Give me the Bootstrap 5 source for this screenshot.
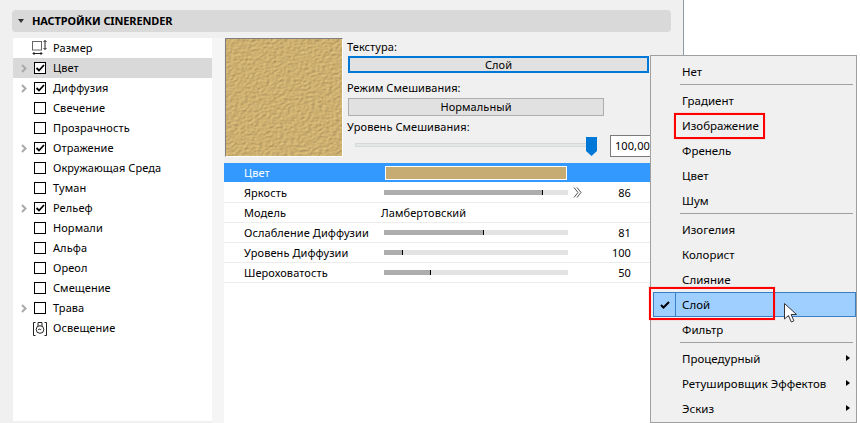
<!DOCTYPE html>
<html lang="ru"><head><meta charset="utf-8">
<link href="https://cdn.jsdelivr.net/npm/bootstrap@5.3.0/dist/css/bootstrap.min.css" rel="stylesheet">
<style>
html,body{width:860px;height:423px;overflow:hidden;background:#fff;}
body{font-family:"Noto Sans","Liberation Sans",sans-serif;font-size:11px;line-height:20px;color:#000;letter-spacing:.08px;position:relative;}
.stage{width:684px;height:423px;background:#f0f0f0;padding:10px 12px 0 12px;border-right:1px solid #8b9baa;}
.hdr{height:22px;background:#d9d9d9;border-radius:4px;font-weight:700;font-size:11px;line-height:22px;letter-spacing:-.12px;padding-left:6px;gap:8px;}
.tri{width:0;height:0;border-left:3.5px solid transparent;border-right:3.5px solid transparent;border-top:4px solid #333;}
.body-wrap{margin-top:6px;height:385px;}
.tree{width:199px;height:383px;margin-left:1px;background:#fff;flex:none;}
.tr-row{height:20px;}
.tr-row.sel{background:#d9d9d9;}
.arrow{width:21px;flex:none;padding-left:8px;line-height:0;}
.ck{width:12px;height:12px;border:1px solid #000;background:#fff;flex:none;margin-right:7px;}
.ic{width:16px;height:16px;flex:none;margin-left:-2px;margin-right:5px;}
.gap-side{width:12px;background:#f5f5f5;flex:none;}
.rightp{flex:1;min-width:0;}
.top-zone{height:125px;padding:0 0 0 1px;background:#f0f0f0;}
.tex{width:118px;height:119px;flex:none;border:1px solid #808080;border-right-color:#fff;border-bottom-color:#fff;display:block;}
.ctrl{padding-left:4px;flex:1;min-width:0;}
.lbl{line-height:14px;height:14px;}
.selbtn{height:17px;width:301px;margin-left:1px;background:#e1e1e1;border:2px solid #0078d7;text-align:center;line-height:13px;margin-top:2px;}
.selbtn2{height:18px;width:256px;margin-left:1px;background:#e1e1e1;border:1px solid #adadad;text-align:center;line-height:16px;margin-top:3px;}
.sldr{height:22px;margin-top:1px;}
.trk{width:235px;height:4px;background:#e4e8e8;border:1px solid #d5d9d9;margin-left:8px;margin-bottom:2px;position:relative;flex:none;}
.thumb{position:absolute;right:-8px;top:-7px;width:11px;height:19px;display:block;}
.num{width:50px;height:22px;background:#fff;border:1px solid #7a7a7a;border-right:0;margin-left:20px;line-height:20px;padding-left:4px;flex:none;}
.params{background:#fff;height:260px;}
.prow{height:20px;border-bottom:1px solid #ececec;}
.prow.hl{background:#3399ff;color:#fff;border-bottom-color:#fff;}
.pn{width:160px;padding-left:20px;flex:none;}
.bar{width:184px;height:5px;background:#e3e3e3;position:relative;flex:none;}
.fill{height:5px;background:#adadad;border-right:1px solid #000;}
.swatch{width:182px;height:14px;background:#c6ab72;border:1px solid #fff;margin-left:1px;flex:none;}
.val{width:63px;text-align:right;flex:none;}
.chev{width:14px;height:11px;margin:0 -19px 0 5px;flex:none;}
.lamb{margin-left:-3px;}
.menu-box{position:absolute;left:650px;top:55px;width:207px;height:368px;padding-top:3px;background:#f0f0f0;border:1px solid #a0a0a0;font-size:11.500px;letter-spacing:.02px;}
.mi{height:25px;line-height:25px;padding-left:31px;position:relative;}
.msep{height:1px;background:#a0a0a0;margin:0 3px 3px 29px;}
.mi.act{background:#9fcfff;border:1px solid #3a7fc5;height:25px;line-height:23px;padding-left:28px;margin:0 0 0 2px;}
.chk{position:absolute;left:0;top:0;width:22px;height:23px;border-right:1px solid #3a7fc5;text-align:center;line-height:21px;}
.sub{position:absolute;right:6px;top:9px;width:0;height:0;border-top:3.500px solid transparent;border-bottom:3.500px solid transparent;border-left:4px solid #000;}
.rbox{position:absolute;border:2px solid #ff0000;box-shadow:0 0 1px rgba(255,0,0,.45);}
.rb1{left:674px;top:113px;width:91px;height:26px;}
.rb2{left:649px;top:287px;width:126px;height:33px;}
.cur{position:absolute;left:784px;top:303px;width:13px;height:20px;}
.mt2px{margin-top:2px;}
.mt8px{margin-top:8px;}
.mt4px{margin-top:4px;}
</style></head>
<body>
<div class="stage">
  <div class="hdr d-flex align-items-center"><span class="tri"></span><span>НАСТРОЙКИ CINERENDER</span></div>
  <div class="body-wrap d-flex">
    <div class="tree">
      <div class="tr-row d-flex align-items-center"><span class="arrow"></span><svg class="ic" viewBox="0 0 16 16" fill="none" stroke="#222"><rect x=".5" y="1.500" width="9" height="8.500" stroke="#666"/><path d="M13 .5v9M11.500 2 13 .5 14.500 2M11.500 8 13 9.500 14.500 8M1 13.500h9M2.500 12 1 13.500 2.500 15M8.500 12 10 13.500 8.500 15"/></svg><span>Размер</span></div>
      <div class="tr-row sel d-flex align-items-center"><span class="arrow"><svg width="6" height="9" viewBox="0 0 6 9" fill="none" stroke="#aaa" stroke-width="2"><path d="M1 1l3.500 3.500L1 8"/></svg></span><span class="ck"><svg width="10" height="10" viewBox="0 0 10 10" fill="none" stroke="#000" stroke-width="1.800" class="d-block"><path d="M1.500 5l2.500 2.500L9 2"/></svg></span><span>Цвет</span></div>
      <div class="tr-row d-flex align-items-center"><span class="arrow"><svg width="6" height="9" viewBox="0 0 6 9" fill="none" stroke="#aaa" stroke-width="2"><path d="M1 1l3.500 3.500L1 8"/></svg></span><span class="ck"><svg width="10" height="10" viewBox="0 0 10 10" fill="none" stroke="#000" stroke-width="1.800" class="d-block"><path d="M1.500 5l2.500 2.500L9 2"/></svg></span><span>Диффузия</span></div>
      <div class="tr-row d-flex align-items-center"><span class="arrow"></span><span class="ck"></span><span>Свечение</span></div>
      <div class="tr-row d-flex align-items-center"><span class="arrow"></span><span class="ck"></span><span>Прозрачность</span></div>
      <div class="tr-row d-flex align-items-center"><span class="arrow"><svg width="6" height="9" viewBox="0 0 6 9" fill="none" stroke="#aaa" stroke-width="2"><path d="M1 1l3.500 3.500L1 8"/></svg></span><span class="ck"><svg width="10" height="10" viewBox="0 0 10 10" fill="none" stroke="#000" stroke-width="1.800" class="d-block"><path d="M1.500 5l2.500 2.500L9 2"/></svg></span><span>Отражение</span></div>
      <div class="tr-row d-flex align-items-center"><span class="arrow"></span><span class="ck"></span><span>Окружающая Среда</span></div>
      <div class="tr-row d-flex align-items-center"><span class="arrow"></span><span class="ck"></span><span>Туман</span></div>
      <div class="tr-row d-flex align-items-center"><span class="arrow"><svg width="6" height="9" viewBox="0 0 6 9" fill="none" stroke="#aaa" stroke-width="2"><path d="M1 1l3.500 3.500L1 8"/></svg></span><span class="ck"><svg width="10" height="10" viewBox="0 0 10 10" fill="none" stroke="#000" stroke-width="1.800" class="d-block"><path d="M1.500 5l2.500 2.500L9 2"/></svg></span><span>Рельеф</span></div>
      <div class="tr-row d-flex align-items-center"><span class="arrow"></span><span class="ck"></span><span>Нормали</span></div>
      <div class="tr-row d-flex align-items-center"><span class="arrow"></span><span class="ck"></span><span>Альфа</span></div>
      <div class="tr-row d-flex align-items-center"><span class="arrow"></span><span class="ck"></span><span>Ореол</span></div>
      <div class="tr-row d-flex align-items-center"><span class="arrow"></span><span class="ck"></span><span>Смещение</span></div>
      <div class="tr-row d-flex align-items-center"><span class="arrow"><svg width="6" height="9" viewBox="0 0 6 9" fill="none" stroke="#aaa" stroke-width="2"><path d="M1 1l3.500 3.500L1 8"/></svg></span><span class="ck"></span><span>Трава</span></div>
      <div class="tr-row d-flex align-items-center"><span class="arrow"></span><svg class="ic" viewBox="0 0 16 16" fill="none" stroke="#222"><path d="M3.500 2.500h-2v13h2M12.500 2.500h2v13h-2"/><circle cx="8" cy="9.500" r="3.800"/><path d="M6 6V2.500h4V6M6.200 9.800l1-.8 1 .8 1-.8"/></svg><span>Освещение</span></div>
    </div>
    <div class="gap-side"></div>
    <div class="rightp">
      <div class="top-zone d-flex">
        <svg class="tex" viewBox="0 0 118 119" preserveAspectRatio="none"><filter id="grain" x="0" y="0" width="100%" height="100%" color-interpolation-filters="sRGB"><feTurbulence type="fractalNoise" baseFrequency=".28 .42" numOctaves="3" seed="7"/><feDiffuseLighting surfaceScale=".55" lighting-color="#edcb82"><feDistantLight azimuth="45" elevation="60"/></feDiffuseLighting></filter><rect width="118" height="119" fill="#d3b46e"/><rect width="118" height="119" filter="url(#grain)"/></svg>
        <div class="ctrl">
          <div class="lbl mt2px">Текстура:</div>
          <div class="selbtn">Слой</div>
          <div class="lbl mt8px">Режим Смешивания:</div>
          <div class="selbtn2">Нормальный</div>
          <div class="lbl mt4px">Уровень Смешивания:</div>
          <div class="sldr d-flex align-items-center">
            <div class="trk"><svg class="thumb" viewBox="0 0 11 19"><path d="M0 0h11v14l-5.500 5L0 14z" fill="#0078d7"/></svg></div>
            <div class="num">100,00</div>
          </div>
        </div>
      </div>
      <div class="params">
        <div class="prow hl d-flex align-items-center"><span class="pn">Цвет</span><span class="swatch"></span></div>
        <div class="prow d-flex align-items-center"><span class="pn">Яркость</span><span class="bar"><span class="fill d-block" style="width:159px"></span></span><svg class="chev" viewBox="0 0 14 11" fill="none" stroke="#555"><path d="M1 .5l4 5-4 5M4 .5l4 5-4 5"/></svg><span class="val">86</span></div>
        <div class="prow d-flex align-items-center"><span class="pn">Модель</span><span class="lamb">Ламбертовский</span></div>
        <div class="prow d-flex align-items-center"><span class="pn">Ослабление Диффузии</span><span class="bar"><span class="fill d-block" style="width:100px"></span></span><span class="val">81</span></div>
        <div class="prow d-flex align-items-center"><span class="pn">Уровень Диффузии</span><span class="bar"><span class="fill d-block" style="width:19px"></span></span><span class="val">100</span></div>
        <div class="prow d-flex align-items-center"><span class="pn">Шероховатость</span><span class="bar"><span class="fill d-block" style="width:47px"></span></span><span class="val">50</span></div>
      </div>
    </div>
  </div>
</div>
<div class="menu-box">
  <div class="mi">Нет</div><div class="msep"></div>
  <div class="mi">Градиент</div>
  <div class="mi">Изображение</div>
  <div class="mi">Френель</div>
  <div class="mi">Цвет</div>
  <div class="mi">Шум</div><div class="msep"></div>
  <div class="mi">Изогелия</div>
  <div class="mi">Колорист</div>
  <div class="mi">Слияние</div>
  <div class="mi act"><span class="chk"><svg width="10" height="8" viewBox="0 0 10 8" fill="none" stroke="#000" stroke-width="2"><path d="M1 4l2.500 2.500L9 1"/></svg></span>Слой</div>
  <div class="mi">Фильтр</div><div class="msep"></div>
  <div class="mi">Процедурный<span class="sub"></span></div>
  <div class="mi">Ретушировщик Эффектов<span class="sub"></span></div>
  <div class="mi">Эскиз<span class="sub"></span></div>
</div>
<div class="rbox rb1"></div>
<div class="rbox rb2"></div>
<svg class="cur" viewBox="0 0 13 20"><path d="M.5.500v15.500l4-3.500 2.800 6.500 2.600-1.200-2.800-6.300h5.400z" fill="#fff" stroke="#333"/></svg>
</body></html>
